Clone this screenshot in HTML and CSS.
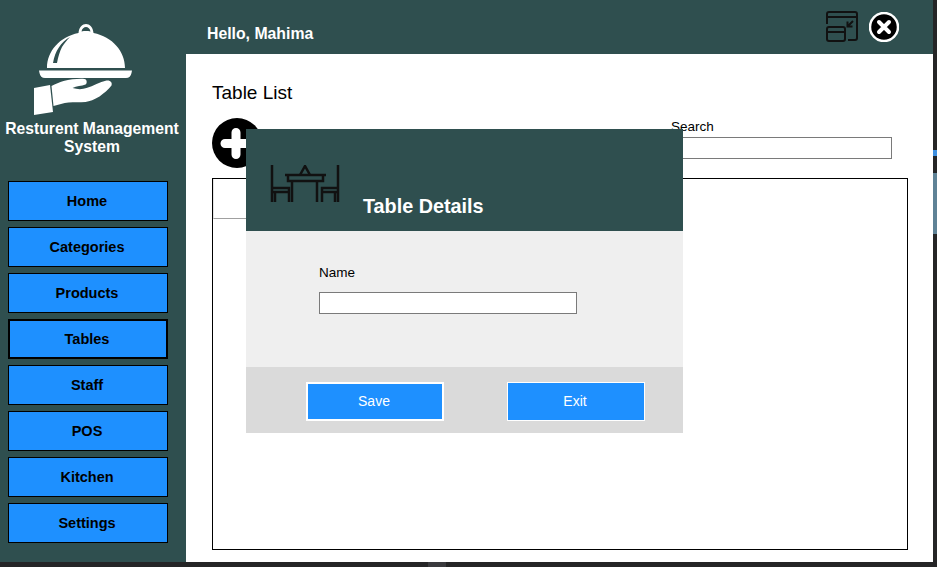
FILE: index.html
```html
<!DOCTYPE html>
<html lang="en">

<head>
    <meta charset="UTF-8">
    <title>Resturent Management System</title>
    <link rel="stylesheet" href="styles.css">
</head>

<body>
    <div class="window">
        <div class="sidebar">
            <svg class="logo" viewBox="34 24 98 92" fill="#fff">
                <path fill-rule="evenodd" d="M78.500 33c.5-6 4-9 7.500-9s7 3 7.500 9c19 4 31.500 18 31.500 35h-78c0-17 12.500-31 31.500-35zM81.500 31.500c3-.6 6-.6 9 0-.5-3-2.500-4.500-4.500-4.500s-4 1.500-4.500 4.500z" />
                <path d="M70 37c-9 5-15 14-17 26h4c1-6 3-12 5-16 2.500-4 5-7 8-10z" fill="#2f4f4f" />
                <path d="M39 70.500h93l-.5 2.500c-.5 3-2.500 5-5.500 5h-81c-3 0-5-2-5.500-5z" />
                <path d="M34 88l16-3 3 27-19 3z" />
                <path d="M51.500 86c4-2 8-4 12-5 7-1.500 15-2.500 21-2 2.500 0 3 4.500 1 5.500-4 1.500-9 1.500-13 3.500 5 1.500 10 1.500 14 0 7-2 13-6 20-7.500 4-.5 6 2 5 5-3 4-8 8-12 11-5 3-10 5-14 5.500-6 .5-11 0-17 .5-5 .5-10 2-15 3.500z" />
            </svg>
            <div class="brand">Resturent Management System</div>
            <div class="nav">
                <button class="nav-btn">Home</button>
                <button class="nav-btn">Categories</button>
                <button class="nav-btn">Products</button>
                <button class="nav-btn active">Tables</button>
                <button class="nav-btn">Staff</button>
                <button class="nav-btn">POS</button>
                <button class="nav-btn">Kitchen</button>
                <button class="nav-btn">Settings</button>
            </div>
        </div>
        <div class="main">
            <div class="topbar">
                <span class="hello">Hello, Mahima</span>
                <svg class="restore" viewBox="0 0 32 31" fill="none" stroke="#111" stroke-width="2">
                    <path d="M1 13V3a2 2 0 0 1 2-2h26a2 2 0 0 1 2 2v24a2 2 0 0 1-2 2h-7" />
                    <path d="M1 6h30" />
                    <rect x="1" y="16" width="18" height="14" rx="2" />
                    <path d="M1 21h18" />
                    <path d="M27 10l-5 5M21.500 10.500v5h5" />
                </svg>
                <svg class="close" viewBox="0 0 30 30">
                    <circle cx="15" cy="15" r="14" fill="#000" stroke="#fff" stroke-width="2.500" />
                    <path d="M10 10l10 10M20 10l-10 10" stroke="#fff" stroke-width="4" stroke-linecap="round" />
                </svg>
            </div>
            <div class="content">
                <h1 class="page-title">Table List</h1>
                <div class="tools">
                    <svg class="add" viewBox="0 0 50 50">
                        <circle cx="25" cy="25" r="25" fill="#000" />
                        <path d="M24 14.500v22M13 25.500h22" stroke="#fff" stroke-width="9" stroke-linecap="round" />
                    </svg>
                    <div class="search">
                        <label class="search-label">Search</label>
                        <input class="search-input" type="text">
                    </div>
                </div>
                <div class="grid-box">
                    <div class="grid-corner"></div>
                </div>
            </div>
        </div>

        <div class="modal">
            <div class="modal-head">
                <svg class="table-icon" viewBox="270 165 70 38" fill="none" stroke="#111" stroke-width="2.500">
                    <path d="M272 165v37M272 188h17v14M272 192h17M275 192v10" />
                    <path d="M338 165v37M338 188h-16v14M338 192h-16M335 192v10" />
                    <path d="M285 175h41M288 175v6h35v-6M292 181v21M317 181v21" />
                    <path d="M300 175l5-9 5 9" />
                </svg>
                <span class="modal-title">Table Details</span>
            </div>
            <div class="modal-body">
                <label class="name-label">Name</label>
                <input class="name-input" type="text">
            </div>
            <div class="modal-foot">
                <button class="foot-btn default">Save</button>
                <button class="foot-btn">Exit</button>
            </div>
        </div>
    </div>

    <!-- bits of the editor window behind the app -->
    <div class="behind-right">
        <div class="behind-marker"></div>
        <div class="behind-panel"></div>
    </div>
    <div class="behind-bottom"></div>
</body>

</html>
```

FILE: styles.css
```css
html, body {
    margin: 0;
    height: 100%;
    background: #252526;
    overflow: hidden;
}

body {
    position: relative;
    font-family: "Liberation Sans", Arial, sans-serif;
}

.window {
    position: relative;
    display: flex;
    width: 933px;
    height: 562px;
    background: #2f4f4f;
}

.sidebar {
    width: 186px;
    flex: none;
    box-sizing: border-box;
    padding: 24px 0 0 8px;
}

.logo {
    display: block;
    width: 98px;
    height: 92px;
    margin-left: 26px;
}

.brand {
    width: 184px;
    margin: 4px 0 0 -8px;
    color: #fff;
    font-size: 15.700px;
    font-weight: bold;
    line-height: 18px;
    text-align: center;
}

.nav {
    display: flex;
    flex-direction: column;
    gap: 6px;
    margin-top: 25px;
}

.nav-btn {
    width: 160px;
    height: 40px;
    padding: 0 2px 0 0;
    border: 1px solid #000;
    background: #1e90ff;
    color: #000;
    font-family: inherit;
    font-size: 14.500px;
    font-weight: bold;
}

.nav-btn.active {
    border-width: 2px;
}

.main {
    flex: 1;
    display: flex;
    flex-direction: column;
}

.topbar {
    height: 54px;
    flex: none;
    display: flex;
    align-items: flex-start;
    box-sizing: border-box;
    padding: 11px 34px 0 21px;
}

.hello {
    margin-top: 14px;
    color: #fff;
    font-size: 15.800px;
    font-weight: bold;
}

.restore {
    width: 32px;
    height: 31px;
    margin-left: auto;
    margin-right: 11px;
}

.close {
    width: 30px;
    height: 30px;
    margin-top: 1px;
}

.content {
    flex: 1;
    background: #fff;
    padding: 28px 25px 12px 26px;
    display: flex;
    flex-direction: column;
}

.page-title {
    margin: 0;
    font-size: 19px;
    font-weight: normal;
    line-height: 22px;
    color: #000;
}

.tools {
    display: flex;
    justify-content: space-between;
    height: 74px;
    padding-right: 16px;
    margin-top: 0;
}

.add {
    width: 50px;
    height: 50px;
    margin-top: 14px;
}

.search {
    display: flex;
    flex-direction: column;
    margin-top: 15px;
}

.search-label {
    font-size: 13.500px;
    line-height: 16px;
}

.search-input {
    width: 221px;
    height: 22px;
    box-sizing: border-box;
    border: 1px solid #7a7a7a;
    padding: 0;
    margin-top: 2px;
    outline: none;
}

.grid-box {
    flex: 1;
    border: 1px solid #000;
    background: #fff;
}

.grid-corner {
    width: 33px;
    height: 39px;
    background: #fff;
    border-bottom: 1px solid #a0a0a0;
    border-left: 1px solid #e4e4e4;
}

/* dialog sits on top of the list */
.modal {
    position: absolute;
    left: 246px;
    top: 129px;
    width: 437px;
    height: 304px;
    display: flex;
    flex-direction: column;
}

.modal-head {
    height: 102px;
    flex: none;
    background: #2f4f4f;
    display: flex;
    box-sizing: border-box;
    padding: 36px 0 0 24px;
}

.table-icon {
    width: 70px;
    height: 38px;
}

.modal-title {
    margin: 29px 0 0 23px;
    color: #fff;
    font-size: 19.800px;
    font-weight: bold;
    line-height: 24px;
}

.modal-body {
    flex: 1;
    background: #efefef;
    display: flex;
    flex-direction: column;
    align-items: flex-start;
    padding: 34px 0 0 73px;
}

.name-label {
    font-size: 13.500px;
    line-height: 16px;
}

.name-input {
    width: 258px;
    height: 22px;
    box-sizing: border-box;
    border: 1px solid #7a7a7a;
    padding: 0;
    margin-top: 11px;
    outline: none;
}

.modal-foot {
    height: 66px;
    flex: none;
    background: #dadada;
    display: flex;
    gap: 63px;
    box-sizing: border-box;
    padding: 15px 0 0 60px;
}

.foot-btn {
    width: 138px;
    height: 39px;
    padding: 0 2px 2px 0;
    border: 1px solid #fff;
    background: #1e90ff;
    color: #fff;
    font-family: inherit;
    font-size: 14px;
}

.foot-btn.default {
    border-width: 2px;
}

.behind-right {
    position: absolute;
    right: 0;
    top: 150px;
    width: 4px;
}

.behind-marker {
    height: 6px;
    background: #3d8fe0;
}

.behind-panel {
    height: 61px;
    margin-top: 17px;
    background: #5f8296;
}

.behind-bottom {
    position: absolute;
    left: 428px;
    top: 562px;
    width: 18px;
    height: 5px;
    background: #3a3a3d;
}
```
